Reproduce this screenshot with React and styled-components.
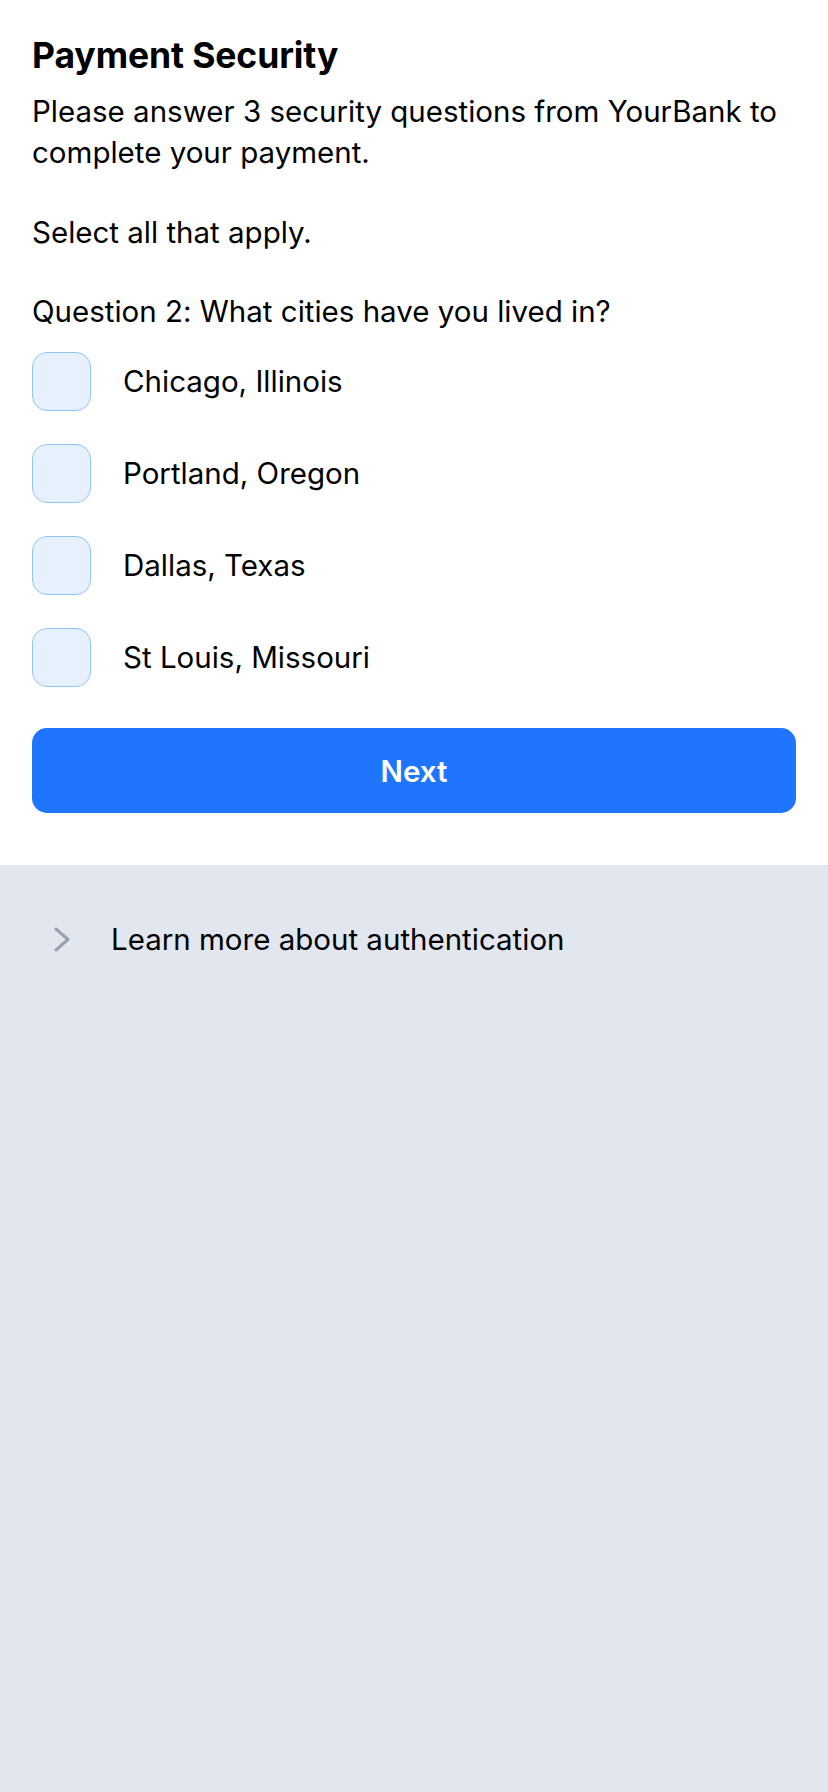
import React from "react";
import styled, { createGlobalStyle } from "styled-components";

const GlobalStyle = createGlobalStyle`
  html, body {
    margin: 0;
    padding: 0;
    background: #e2e6ee;
  }
  body {
    font-family: Inter, "Noto Sans", "Liberation Sans", sans-serif;
    font-feature-settings: "calt" 0;
    color: #000;
    -webkit-font-smoothing: antialiased;
  }
  * { box-sizing: border-box; }
`;

const Page = styled.div`
  min-height: 100vh;
  display: flex;
  flex-direction: column;
`;

const Card = styled.section`
  background: #ffffff;
  padding: 35px 32px 52px;
  display: flex;
  flex-direction: column;
`;

const Title = styled.h1`
  margin: 0;
  font-size: 35.5px;
  font-weight: 700;
  line-height: 41px;
  letter-spacing: -0.1px;
`;

const Text = styled.p`
  margin: ${(p) => p.$top || 0}px 0 0;
  font-size: 29.5px;
  font-weight: 400;
  line-height: 41px;
`;

const Options = styled.div`
  margin-top: 20px;
  display: flex;
  flex-direction: column;
  gap: 33px;
`;

const Option = styled.label`
  display: flex;
  align-items: center;
  gap: 32px;
  font-size: 29.5px;
  line-height: 41px;
  cursor: pointer;
`;

const Box = styled.span`
  flex: none;
  width: 59px;
  height: 59px;
  border-radius: 15px;
  background: #e7f1fd;
  border: 1.5px solid #92c5f7;
`;

const NextButton = styled.button`
  margin-top: 41px;
  height: 85px;
  width: 100%;
  border: none;
  border-radius: 15px;
  background: #1f75fe;
  color: #ffffff;
  font-family: inherit;
  font-size: 29.5px;
  font-weight: 600;
`;

const Footer = styled.section`
  flex: 1;
  background: #e2e6ee;
  padding: 54px 54px 0;
`;

const LearnRow = styled.div`
  display: flex;
  align-items: center;
  gap: 41px;
  font-size: 29.5px;
  line-height: 41px;
`;

const Chevron = () => (
  <svg width="16" height="25" viewBox="0 0 16 25" fill="none">
    <polyline
      points="2,2 14,12.5 2,23"
      stroke="#9aa2ad"
      strokeWidth="3"
      strokeLinecap="round"
      strokeLinejoin="round"
    />
  </svg>
);

const cities = [
  "Chicago, Illinois",
  "Portland, Oregon",
  "Dallas, Texas",
  "St Louis, Missouri",
];

export default function App() {
  return (
    <Page>
      <GlobalStyle />
      <Card>
        <Title>Payment Security</Title>
        <Text $top={15}>
          Please answer 3 security questions from YourBank to complete your
          payment.
        </Text>
        <Text $top={39}>Select all that apply.</Text>
        <Text $top={38}>Question 2: What cities have you lived in?</Text>
        <Options>
          {cities.map((c) => (
            <Option key={c}>
              <Box />
              <span>{c}</span>
            </Option>
          ))}
        </Options>
        <NextButton>Next</NextButton>
      </Card>
      <Footer>
        <LearnRow>
          <Chevron />
          <span>Learn more about authentication</span>
        </LearnRow>
      </Footer>
    </Page>
  );
}
